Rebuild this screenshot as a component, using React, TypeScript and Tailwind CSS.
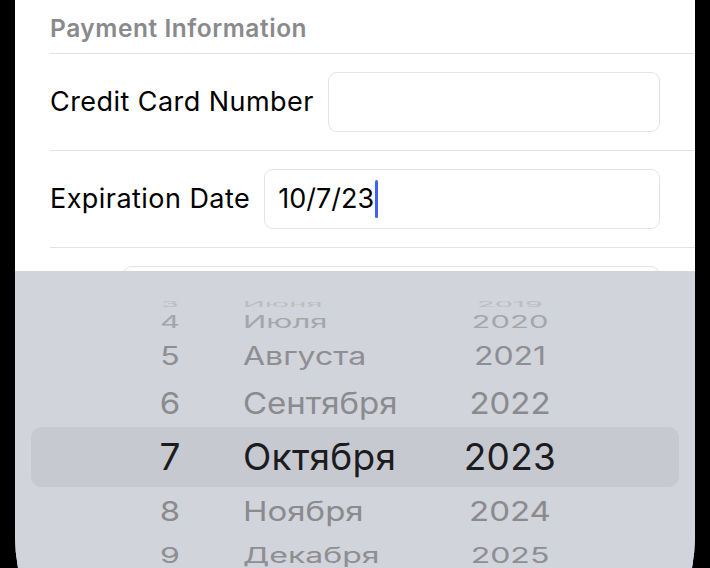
const font = { fontFamily: "Inter, 'Noto Sans', sans-serif" };

type WheelRow = {
  day: string;
  month: string;
  year: string;
  rowClass: string;
  textClass: string;
};

const wheel: WheelRow[] = [
  { day: "3", month: "Июня", year: "2019", rowClass: "h-[16px]", textClass: "text-[29px] scale-y-[0.26] text-[#bcbdc1]" },
  { day: "4", month: "Июля", year: "2020", rowClass: "h-[18px]", textClass: "text-[31px] scale-y-[0.55] text-[#a5a6ab]" },
  { day: "5", month: "Августа", year: "2021", rowClass: "h-[50px]", textClass: "text-[32px] scale-y-[0.78] text-[#8e8e93]" },
  { day: "6", month: "Сентября", year: "2022", rowClass: "h-[46px]", textClass: "text-[33px] scale-y-[0.9] text-[#8a8a8f]" },
  { day: "7", month: "Октября", year: "2023", rowClass: "h-[60px] rounded-[11px] bg-[#c6c9d0]", textClass: "text-[37px] tracking-[0.3px] text-[#1c1c1e]" },
  { day: "8", month: "Ноября", year: "2024", rowClass: "h-[50px]", textClass: "text-[33px] scale-y-[0.82] text-[#8a8a8f]" },
  { day: "9", month: "Декабря", year: "2025", rowClass: "h-[38px]", textClass: "text-[32px] scale-y-[0.66] text-[#8e8e93]" },
];

function FormRow({ label, value, caret }: { label?: string; value?: string; caret?: boolean }) {
  return (
    <div className="flex h-[97px] shrink-0 items-center gap-[14px] border-b border-[#e2e2e4] pr-[35px]">
      {label ? (
        <span className="whitespace-nowrap text-[27px] tracking-[0.45px] text-black">{label}</span>
      ) : (
        <div className="w-[59px]" />
      )}
      <div className="flex h-[60px] flex-1 items-center rounded-[9px] border border-[#e3e3e6] bg-white px-[13px] text-[27px] text-black">
        {value}
        {caret && <span className="ml-[1px] h-[38px] w-[3px] rounded-full bg-[#3f62f2]" />}
      </div>
    </div>
  );
}

export default function App() {
  return (
    <div className="h-[568px] w-[710px] overflow-hidden bg-black" style={font}>
      <div className="mx-[15px] flex h-[718px] flex-col overflow-hidden rounded-b-[183px] bg-white">
        {/* form behind the picker */}
        <div className="h-[271px] shrink-0 overflow-hidden pl-[35px]">
          <div className="border-b border-[#e2e2e4] pb-[11px] pt-[14px]">
            <h2 className="text-[24.5px] font-semibold leading-[28px] tracking-[0.55px] text-[#8a8a8e]">Payment Information</h2>
          </div>
          <FormRow label="Credit Card Number" />
          <FormRow label="Expiration Date" value="10/7/23" caret />
          <FormRow />
        </div>

        {/* date wheel */}
        <div className="flex flex-1 flex-col bg-[#d1d4da] px-4 pt-[26px]">
          {wheel.map((r) => (
            <div key={r.day} className={`flex shrink-0 items-center ${r.rowClass}`}>
              <div className="ml-[89px] w-[100px] text-center">
                <span className={`inline-block leading-none ${r.textClass}`}>{r.day}</span>
              </div>
              <div className="ml-[23px] w-[200px]">
                <span className={`inline-block leading-none ${r.textClass}`}>{r.month}</span>
              </div>
              <div className="w-[134px] text-center">
                <span className={`inline-block leading-none ${r.textClass}`}>{r.year}</span>
              </div>
            </div>
          ))}
        </div>
      </div>
    </div>
  );
}
